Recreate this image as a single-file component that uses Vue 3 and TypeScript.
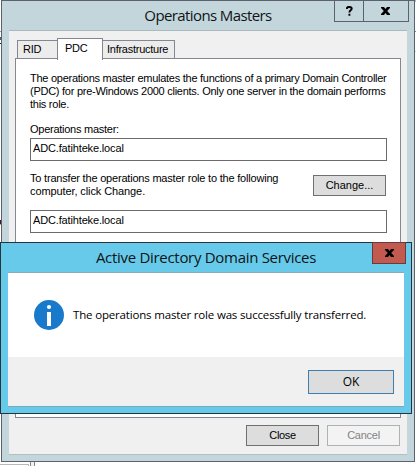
<script setup lang="ts">
import { ref } from 'vue'

interface Line { text: string; cls: string }

const tabs = ['RID', 'PDC', 'Infrastructure']
const activeTab = ref('PDC')
const server = 'ADC.fatihteke.local'
const description: Line[] = [
  { text: 'The operations master emulates the functions of a primary Domain Controller', cls: 'd1' },
  { text: '(PDC) for pre-Windows 2000 clients. Only one server in the domain performs', cls: 'd2' },
  { text: 'this role.', cls: 'd3' },
]
</script>

<template>
  <main class="desktop">
    <i class="bg left-a"></i><i class="bg left-b"></i><i class="bg left-c"></i><i class="bg left-d"></i><i class="bg right-a"></i><i class="bg right-b"></i>
    <i class="bg bottom-a"></i><i class="bg bottom-b"></i>

    <section class="window">
      <header class="titlebar">
        <h1><span class="t-main">Operations Masters</span></h1>
        <div class="controls">
          <button class="help" aria-label="Help">
            <svg width="7" height="10" viewBox="0 0 7 10"><path d="M1 3V1.8C1.4 .8 5.7.5 5.7 2.7C5.7 4.4 3.4 4.2 3.4 6.4M3.4 7.8V9.7" fill="none" stroke="#000" stroke-width="1.9" /></svg>
          </button>
          <button class="close" aria-label="Close window">
            <svg width="9" height="8" viewBox="0 0 9 8"><path d="M0 0H3L4.5 2L6 0H9V1L6.2 4L9 7V8H6L4.5 6L3 8H0V7L2.8 4L0 1Z" fill="#000" /></svg>
          </button>
        </div>
      </header>
      <div class="client">
        <nav class="tabs">
          <button v-for="tab in tabs" :key="tab" class="tab" :class="[tab.toLowerCase(), { active: tab === activeTab }]" @click="activeTab = tab"><span>{{ tab }}</span></button>
        </nav>
        <div class="panel">
          <p class="description"><span v-for="line in description" :key="line.cls" :class="line.cls">{{ line.text }}</span></p>
          <p class="label"><span class="lab">Operations master:</span></p>
          <div class="field"><span class="srv">{{ server }}</span></div>
          <div class="transfer">
            <p><span class="t1">To transfer the operations master role to the following</span><span class="t2">computer, click Change.</span></p>
            <button class="btn"><span class="chg">Change...</span></button>
          </div>
          <div class="field"><span class="srv">{{ server }}</span></div>
        </div>
        <footer class="actions">
          <button class="btn"><span class="cls">Close</span></button>
          <button class="btn disabled" disabled><span class="cnc">Cancel</span></button>
        </footer>
      </div>
    </section>

    <section class="dialog" role="alertdialog">
      <header class="dialog-title">
        <h2><span class="t-dialog">Active Directory Domain Services</span></h2>
        <button class="dialog-close" aria-label="Close dialog">
          <svg width="9" height="8" viewBox="0 0 9 8"><path d="M0 0H3L4.5 2L6 0H9V1L6.2 4L9 7V8H6L4.5 6L3 8H0V7L2.8 4L0 1Z" fill="#000" /></svg>
        </button>
      </header>
      <div class="dialog-client">
        <div class="message">
          <svg width="30" height="30" viewBox="0 0 30 30"><circle cx="15" cy="15" r="15" fill="#1979ca" /><circle cx="15" cy="7" r="2.1" fill="#fff" /><path d="M13 12H17V26H13Z" fill="#fff" /></svg>
          <span class="msg">The operations master role was successfully transferred.</span>
        </div>
        <footer class="dialog-footer"><button class="ok"><span>OK</span></button></footer>
      </div>
    </section>
  </main>
</template>

<style>
body { margin: 0; background: #fff; overflow: hidden; }
</style>

<style scoped>
* { box-sizing: border-box; }
.desktop { position: relative; width: 416px; height: 466px; overflow: hidden; background: #fff; font: 11px/13px "Liberation Sans", sans-serif; color: #000; }
h1, h2, p { margin: 0; font-weight: 400; }
button { padding: 0; font: inherit; color: inherit; border-radius: 0; }
span { white-space: nowrap; }
svg { display: block; }
.bg { position: absolute; display: block; }
.left-a { left: 0; top: 31px; width: 1px; height: 1px; background: #999; }
.left-b { left: 0; top: 37px; width: 1px; height: 3px; background: #37648d; }
.left-c { left: 0; top: 43px; width: 1px; height: 1px; background: #222; }
.left-d { left: 0; top: 220px; width: 1px; height: 5px; background: #4b123c; border-bottom: 1px solid #e6a54b; }
.right-a { left: 415px; top: 0; width: 1px; height: 32px; border-top: 2px solid #b8b8c0; border-bottom: 1px solid #888; }
.right-b { left: 415px; top: 51px; width: 1px; height: 1px; background: #ccc; }
.bottom-a { left: -1px; top: 464px; width: 30px; height: 4px; border: 1px solid #b9b9b9; }
.bottom-b { left: 30px; top: 462px; width: 5px; height: 5px; border: 1px solid #828790; border-width: 0 1px; background: #f0f0f0; }

.window { position: absolute; left: 1px; top: 0; width: 414px; height: 462px; border: 1px solid #5b626e; background: #c3d6dc; padding: 0 7px; }
.titlebar { position: relative; height: 29px; display: flex; justify-content: center; }
h1, h2 { font: 15px/20px "Open Sans", sans-serif; color: #101416; }
h1 { padding-top: 4px; }
.t-main { letter-spacing: -.6px; }
.controls { position: absolute; right: -2px; top: -1px; display: flex; width: 75px; height: 22px; border: 1px solid #5b626e; }
.controls button { border: 0; background: transparent; height: 20px; display: flex; align-items: center; justify-content: center; }
.help { width: 28px; }
.controls .close { flex: 1; border-left: 1px solid #5b626e; padding-right: 1px; }
.client { height: 425px; background: #f0f0f0; border-top: 1px solid #abb9be; border-bottom: 1px solid #b2c0c5; padding: 7px 6px 0; display: flex; flex-direction: column; }
.tabs { display: flex; align-items: flex-end; height: 21px; padding-left: 2px; position: relative; z-index: 1; }
.tab { height: 19px; border: 1px solid #828790; background: #ececec; text-align: left; padding: 0 0 0 5px; line-height: 17px; margin-bottom: 0; }
.rid { width: 40px; border-right: 0; }
.pdc { width: 46px; padding-left: 7px; }
.infrastructure { width: 72px; border-left: 0; padding-left: 4px; }
.tab.active { height: 22px; background: #fff; border-bottom: 0; line-height: 16px; padding-bottom: 3px; margin-bottom: -1px; }
.panel { height: 360px; width: 386px; margin-top: -1px; border: 1px solid #828790; background: #fff; padding: 13px 13px 0 14px; flex: none; }
.description { display: flex; flex-direction: column; height: 51px; align-items: flex-start; }
.label { height: 15px; }
.field { width: 357px; height: 23px; border: 1px solid #6b6b6d; padding: 3px 0 0 2px; line-height: 13px; }
.transfer { display: flex; justify-content: space-between; height: 49px; padding: 11px 1px 0 0; }
.transfer p { display: flex; flex-direction: column; align-items: flex-start; }
.transfer .btn { margin-top: 3px; }
.btn { width: 73px; height: 21px; border: 1px solid #707070; background: #ddd; line-height: 19px; }
.actions { display: flex; justify-content: flex-end; gap: 8px; padding: 7px 1px 0 0; }
.disabled { background: #f3f3f3; border-color: #adb2b5; color: #838383; }
.d1, .d2, .d3, .lab, .cnc, .tab span { letter-spacing: -.26px; }
.cls { letter-spacing: -.35px; }
.t1 { letter-spacing: -.2px; }
.t2 { letter-spacing: -.1px; }
.srv { letter-spacing: -.15px; }

.dialog { position: absolute; left: 0; top: 242px; width: 412px; height: 172px; background: #67caea; border: 1px solid #27343b; padding: 0 7px; }
.dialog-title { position: relative; height: 29px; display: flex; justify-content: center; }
h2 { padding-top: 4px; }
.t-dialog { letter-spacing: -.3px; }
.dialog-close { position: absolute; top: -1px; right: -2px; width: 34px; height: 22px; border: 1px solid #673c3c; background: #c35a50; display: flex; align-items: center; justify-content: center; }
.dialog-client { height: 135px; border-top: 1px solid #8aaab6; border-bottom: 1px solid #77aabd; background: #fff; width: 396px; }
.message { height: 84px; display: flex; align-items: center; padding-left: 26px; gap: 9px; }
.msg { font: 11.5px/16px "Open Sans", sans-serif; letter-spacing: -.17px; }
.dialog-footer { height: 49px; background: #f0f0f0; display: flex; justify-content: flex-end; padding: 13px 10px 0 0; }
.ok { width: 86px; height: 24px; border: 1px solid #3e7fb0; background: #ddd; font: 12px/20px "Open Sans", sans-serif; }
</style>
